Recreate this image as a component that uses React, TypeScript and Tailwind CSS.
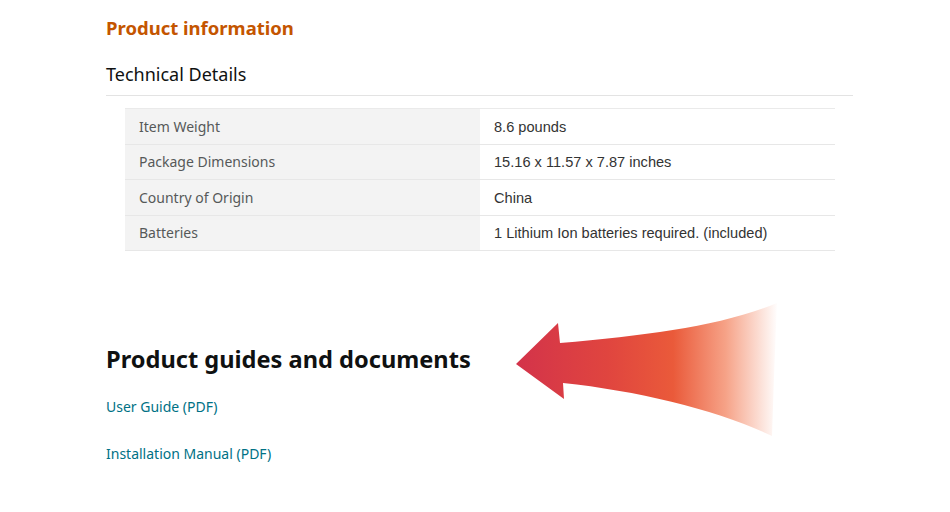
import React from 'react';

const SPECS: [string, string][] = [
  ['Item Weight', '8.6 pounds'],
  ['Package Dimensions', '15.16 x 11.57 x 7.87 inches'],
  ['Country of Origin', 'China'],
  ['Batteries', '1 Lithium Ion batteries required. (included)'],
];

function BigArrow() {
  return (
    <svg width="270" height="140" viewBox="510 300 270 140" className="shrink-0">
      <defs>
        <linearGradient id="arrowFill" x1="516" y1="0" x2="778" y2="0" gradientUnits="userSpaceOnUse">
          <stop offset="0" stopColor="#d3334a" />
          <stop offset="0.35" stopColor="#e0453f" />
          <stop offset="0.6" stopColor="#ea5a3a" />
          <stop offset="0.8" stopColor="#f6a287" />
          <stop offset="1" stopColor="#ffffff" />
        </linearGradient>
      </defs>
      <path
        d="M516,363 L558,322 L560,342 C650,334 720,325 777,302 Q774,370 772,435 C720,410 640,390 563,382 L564,398 Z"
        fill="url(#arrowFill)"
      />
    </svg>
  );
}

export default function App() {
  return (
    <div className="w-[950px] h-[512px] bg-white overflow-hidden" style={{ fontFamily: '"Noto Sans", "Open Sans", sans-serif' }}>
      <div className="ml-[106px] w-[747px] pt-[16px]">
        <h2 className="text-[18.5px] leading-[24px] font-bold text-[#c45500]">Product information</h2>
        <h3 className="mt-[22px] text-[18px] leading-[24px] text-[#0f1111]">Technical Details</h3>
        <div className="mt-[9px] border-t border-[#e3e3e3]" />

        <div className="mt-[12px] ml-[19px] w-[710px] border-t border-[#eaeaea]">
          {SPECS.map(([k, v]) => (
            <div key={k} className="flex h-[35.5px] border-b border-[#e7e7e7] box-border">
              <div className="w-[355px] bg-[#f3f3f3] pl-[14px] flex items-center text-[14px] text-[#565959]">{k}</div>
              <div
                className="flex-1 pl-[14px] pt-[3px] flex items-center text-[14.6px] text-[#333333]"
                style={{ fontFamily: '"Liberation Sans", Arial, sans-serif' }}
              >
                {v}
              </div>
            </div>
          ))}
        </div>

        <div className="mt-[50px] flex items-start">
          <div className="pt-[42px] w-[404px]">
            <h2 className="text-[23.6px] leading-[32px] font-bold text-[#0f1111]">Product guides and documents</h2>
            <div className="mt-[22px] flex flex-col gap-[27px] text-[14px] leading-[20px] text-[#007185]">
              <a href="#">User Guide (PDF)</a>
              <a href="#">Installation Manual (PDF)</a>
            </div>
          </div>
          <BigArrow />
        </div>
      </div>
    </div>
  );
}
